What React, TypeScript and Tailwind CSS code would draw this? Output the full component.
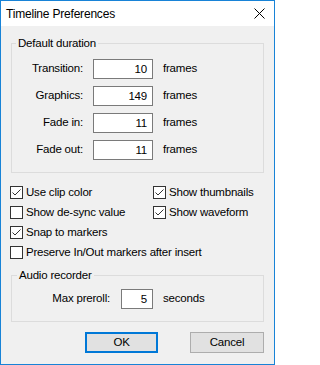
import React from 'react'

const Check = () => (
  <svg width="13" height="13" viewBox="0 0 13 13" className="block">
    <polyline points="2.5,6.5 5,9 10.5,3.5" fill="none" stroke="#333" strokeWidth="1" />
  </svg>
)

const CheckBox = ({ checked, label }: { checked: boolean; label: string }) => (
  <div className="flex items-center h-[13px] whitespace-nowrap">
    <div className="w-[13px] h-[13px] border border-[#333] bg-white shrink-0 relative">
      {checked && (
        <div className="absolute -left-px -top-px">
          <Check />
        </div>
      )}
    </div>
    <span className="ml-[3px]">{label}</span>
  </div>
)

const DurationRow = ({ label, value }: { label: string; value: string }) => (
  <div className="flex items-center h-[20px]">
    <span className="w-[71px] text-right">{label}</span>
    <div className="ml-[10px] w-[60px] h-[20px] border border-[#7a7a7a] bg-white text-right pr-[5px] leading-[18px]">
      {value}
    </div>
    <span className="ml-[10px]">frames</span>
  </div>
)

export default function App() {
  return (
    <div className="w-[275px] h-[365px] border border-[#1883d7] bg-[#f0f0f0] flex flex-col font-['Liberation_Sans',Arial,sans-serif] text-[11.5px] tracking-[-0.2px] text-black">
      <div className="h-[25px] bg-white flex items-center justify-between pl-[5px] pr-[9px] shrink-0">
        <span className="text-[12px]">Timeline Preferences</span>
        <svg width="11" height="11" viewBox="0 0 11 11">
          <line x1="0.5" y1="0.5" x2="10.5" y2="10.5" stroke="#000" strokeWidth="1" />
          <line x1="10.5" y1="0.5" x2="0.5" y2="10.5" stroke="#000" strokeWidth="1" />
        </svg>
      </div>

      <div className="pt-[9px]">
        <fieldset className="mx-[10px] border border-[#dcdcdc] pb-[12px]">
          <legend className="ml-[4px] px-[2px] leading-[16px]">Default duration</legend>
          <div className="flex flex-col gap-[7px] pt-[8px]">
            <DurationRow label="Transition:" value="10" />
            <DurationRow label="Graphics:" value="149" />
            <DurationRow label="Fade in:" value="11" />
            <DurationRow label="Fade out:" value="11" />
          </div>
        </fieldset>

        <div className="grid grid-cols-[143px_1fr] gap-y-[7px] pl-[9px] mt-[13px]">
          <CheckBox checked label="Use clip color" />
          <CheckBox checked label="Show thumbnails" />
          <CheckBox checked={false} label="Show de-sync value" />
          <CheckBox checked label="Show waveform" />
          <div className="col-span-2">
            <CheckBox checked label="Snap to markers" />
          </div>
          <div className="col-span-2">
            <CheckBox checked={false} label="Preserve In/Out markers after insert" />
          </div>
        </div>

        <fieldset className="mx-[10px] mt-[8px] border border-[#dcdcdc] pb-[12px]">
          <legend className="ml-[5px] px-[2px] leading-[16px]">Audio recorder</legend>
          <div className="flex items-center h-[20px] mt-[6px]">
            <span className="w-[98px] text-right">Max preroll:</span>
            <div className="ml-[11px] w-[32px] h-[20px] border border-[#7a7a7a] bg-white text-right pr-[5px] leading-[18px]">
              5
            </div>
            <span className="ml-[10px]">seconds</span>
          </div>
        </fieldset>

        <div className="flex justify-end gap-[32px] px-[10px] mt-[10px]">
          <button className="w-[73px] h-[21px] border-2 border-[#0078d7] bg-[#e1e1e1] leading-[17px]">OK</button>
          <button className="w-[74px] h-[21px] border border-[#adadad] bg-[#e1e1e1] leading-[19px]">Cancel</button>
        </div>
      </div>
    </div>
  )
}
